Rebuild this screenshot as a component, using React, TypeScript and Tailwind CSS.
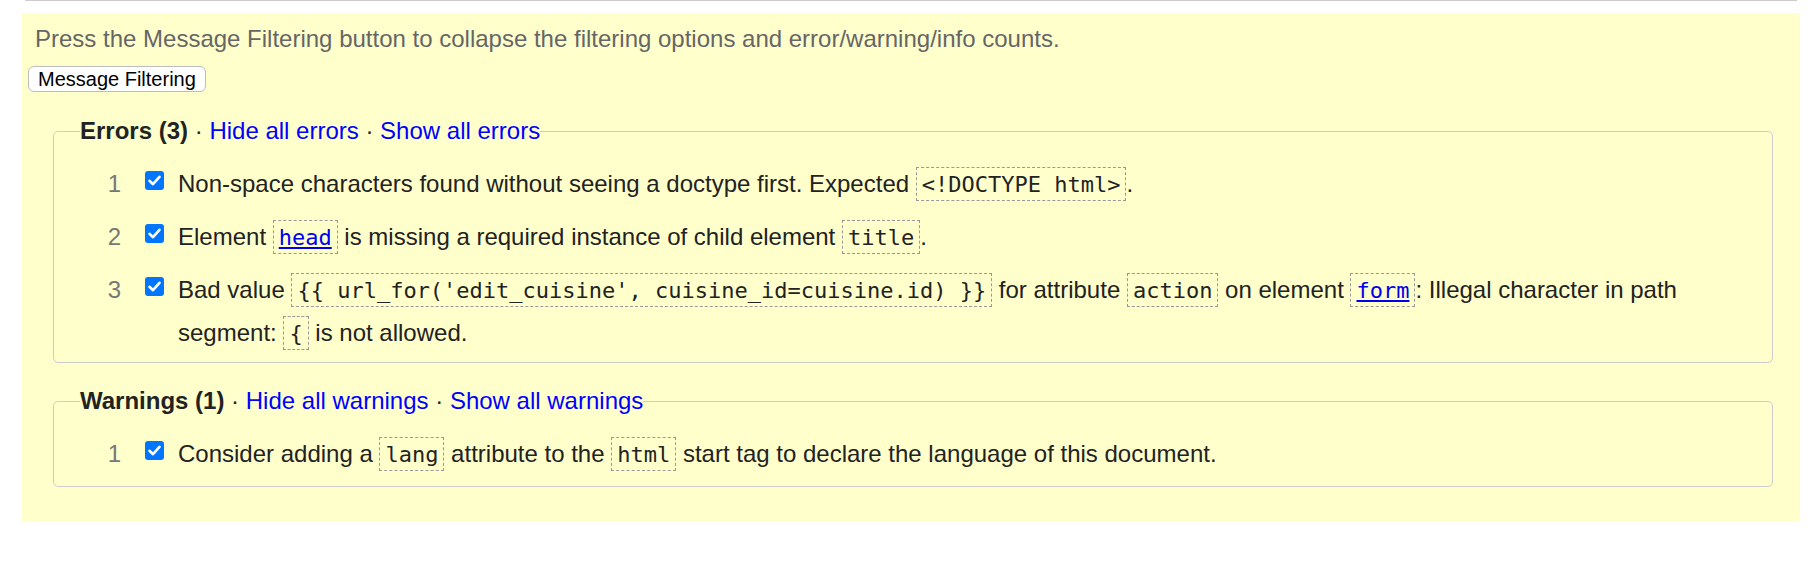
import React from 'react';

const Code: React.FC<{ children: React.ReactNode; link?: boolean }> = ({ children, link }) => (
  <code className="font-['DejaVu_Sans_Mono',monospace] text-[22px] leading-none border border-dashed border-[#999] px-[5px] pt-[4px] pb-[3px]">
    {link ? <a href="#" className="text-[#0000ee] underline">{children}</a> : children}
  </code>
);

const Check: React.FC = () => (
  <span className="ml-[24px] mt-[9px] w-[19px] h-[19px] shrink-0 rounded-[3px] bg-[#0075ff] flex items-center justify-center">
    <svg width="19" height="19" viewBox="0 0 19 19" fill="none">
      <path d="M4.5 9.8 L8 13.2 L14.5 5.8" stroke="#fff" strokeWidth="2.6" strokeLinecap="round" strokeLinejoin="round" />
    </svg>
  </span>
);

const Row: React.FC<{ n: number; first?: boolean; children: React.ReactNode }> = ({ n, first, children }) => (
  <li className={first ? 'flex items-start' : 'flex items-start mt-[10px]'}>
    <span className="w-[40px] shrink-0 text-right text-[#777]">{n}</span>
    <Check />
    <div className="ml-[14px] flex-1 min-w-0">{children}</div>
  </li>
);

const Group: React.FC<{ title: string; kind: string; className: string; children: React.ReactNode }> = ({
  title,
  kind,
  className,
  children,
}) => (
  <fieldset className={`border border-[#ccc] rounded-[5px] ml-[31px] mr-[27px] pr-[20px] ${className}`}>
    <legend className="ml-[26px] px-0 leading-[36px]">
      <strong className="font-bold">{title}</strong> · <a href="#" className="text-[#0000ff]">Hide all {kind}</a> ·{' '}
      <a href="#" className="text-[#0000ff]">Show all {kind}</a>
    </legend>
    <ol className="pl-[27px] pt-[13px] leading-[43px]">{children}</ol>
  </fieldset>
);

export default function App() {
  return (
    <div className="min-h-[565px] bg-white font-['Liberation_Sans',Arial,sans-serif] text-[24px] text-[#222]">
      <div className="ml-[25px] mr-[21px] h-px bg-[#ccc]" />
      <div className="mt-[12px] ml-[22px] mr-[18px] bg-[#ffffcc] pt-[8px] pb-[34px]">
        <p className="pl-[13px] leading-[36px] text-[#666]">
          Press the Message Filtering button to collapse the filtering options and error/warning/info counts.
        </p>
        <button className="mt-[9px] ml-[6px] h-[26px] px-[9px] text-[20px] leading-[24px] text-black bg-white border border-[#bdbdbd] rounded-[6px]">
          Message Filtering
        </button>

        <Group title="Errors (3)" kind="errors" className="mt-[17px] pb-[8px]">
          <Row n={1} first>
            Non-space characters found without seeing a doctype first. Expected <Code>{'<!DOCTYPE html>'}</Code>.
          </Row>
          <Row n={2}>
            Element <Code link>head</Code> is missing a required instance of child element <Code>title</Code>.
          </Row>
          <Row n={3}>
            Bad value <Code>{"{{ url_for('edit_cuisine', cuisine_id=cuisine.id) }}"}</Code> for attribute{' '}
            <Code>action</Code> on element <Code link>form</Code>: Illegal character in path segment:{' '}
            <Code>{'{'}</Code> is not allowed.
          </Row>
        </Group>

        <Group title="Warnings (1)" kind="warnings" className="mt-[20px] pb-[11px]">
          <Row n={1} first>
            Consider adding a <Code>lang</Code> attribute to the <Code>html</Code> start tag to declare the language of
            this document.
          </Row>
        </Group>
      </div>
    </div>
  );
}
